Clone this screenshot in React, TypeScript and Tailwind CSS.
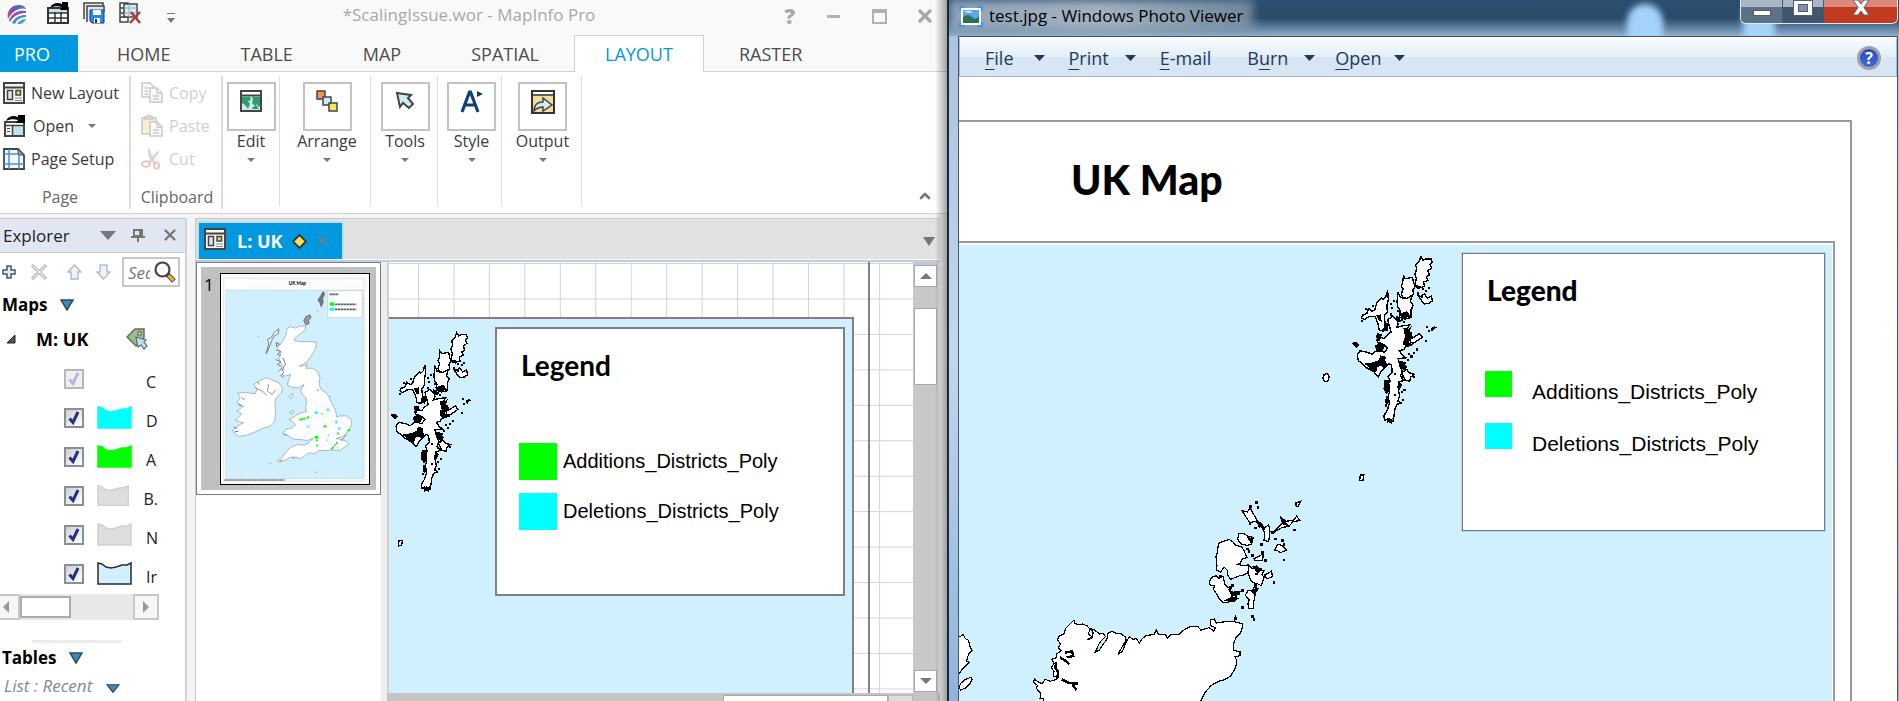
import React from 'react';
import { ChevronUp, X } from 'lucide-react';

type IconProps = { className?: string };

const RIBBON_TABS = ['HOME', 'TABLE', 'MAP', 'SPATIAL', 'LAYOUT', 'RASTER'];

const LAYERS = [
  { id: 'c', label: 'C', fill: '', stroke: '', dim: true },
  { id: 'd', label: 'D', fill: '#00ffff', stroke: '#00ffff' },
  { id: 'a', label: 'A', fill: '#00ff00', stroke: '#00ff00' },
  { id: 'b', label: 'B.', fill: '#dedede', stroke: '#cfcfcf' },
  { id: 'n', label: 'N', fill: '#dedede', stroke: '#cfcfcf' },
  { id: 'i', label: 'Ir', fill: '#d0efff', stroke: '#2b2b2b' },
];

const PHOTO_MENU = [
  { pre: '', key: 'F', post: 'ile', arrow: true, gap: 'gap-5 pr-6' },
  { pre: '', key: 'P', post: 'rint', arrow: true, gap: 'gap-4 pr-6' },
  { pre: '', key: 'E', post: '-mail', arrow: false, gap: 'pr-9' },
  { pre: 'B', key: 'u', post: 'rn', arrow: true, gap: 'gap-4 pr-5' },
  { pre: '', key: 'O', post: 'pen', arrow: true, gap: 'gap-3' },
];

/* ---------- icons ---------- */

const LogoIcon = () => (
  <svg width="20" height="20" viewBox="0 0 20 20">
    <defs>
      <linearGradient id="logo" x1="0" y1="1" x2="1" y2="0">
        <stop offset="0" stopColor="#e0408a" />
        <stop offset="0.5" stopColor="#7b4bb0" />
        <stop offset="1" stopColor="#2f8fd6" />
      </linearGradient>
    </defs>
    <path d="M1 15C-1 7 5 0 13 1c3 0 5 2 6 4C13 3 6 6 1 15z" fill="url(#logo)" />
    <path d="M2 16C6 8 12 6 19 7v2C13 9 7 11 3 18z" fill="#8a53b5" />
    <path d="M5 19c3-6 8-8 14-8v2c-5 0-9 2-11 7z" fill="#4b86d2" />
    <path d="M10 20c2-3 5-5 9-5-1 3-5 6-9 5z" fill="#3aa5dc" />
  </svg>
);

const OpenTableIcon = () => (
  <svg width="22" height="22" viewBox="0 0 22 22">
    <rect x="1" y="6" width="20" height="15" fill="#fff" stroke="#333" strokeWidth="2" />
    <path d="M2 7h18v3H2z" fill="#bfe0ea" />
    <path d="M1 11h20M1 16h20M8 10v11M14 10v11" stroke="#333" strokeWidth="1.5" />
    <path d="M3 6C5 1 10 0 15 2V0h6v8h-8l2-3C11 4 7 4 3 6z" fill="#000" />
  </svg>
);

const SaveIcon = () => (
  <svg width="22" height="22" viewBox="0 0 22 22">
    <path d="M1 17V1h19v4" fill="#eee" stroke="#444" strokeWidth="1.5" />
    <path d="M4 20V4h17v6" fill="#d5ebf5" stroke="#444" strokeWidth="1.5" />
    <path d="M7 8h14v13H9l-2-2z" fill="#2f86e0" stroke="#123c80" />
    <path d="M10 8h8v5h-8z" fill="#fff" />
    <path d="M11 16h6v5h-6z" fill="#fff" />
    <path d="M12 17h2v4h-2z" fill="#123c80" />
  </svg>
);

const CloseTableIcon = () => (
  <svg width="22" height="22" viewBox="0 0 22 22">
    <path d="M1 1h8v19H1zM1 6h8M1 11h8M1 15h8" fill="#fff" stroke="#444" strokeWidth="1.5" />
    <path d="M5 2h13v13H5z" fill="#d5ebf5" stroke="#444" strokeWidth="1.5" />
    <path d="M5 6h13M5 11h13M10 2v13" stroke="#8fb0bb" />
    <path d="M12 10l9 11M21 10l-10 11" stroke="#b03a3a" strokeWidth="2.5" />
  </svg>
);

const NewLayoutIcon = () => (
  <svg width="22" height="22" viewBox="0 0 22 22" className="shrink-0">
    <rect x="1" y="1" width="20" height="20" fill="#f6f6f6" stroke="#444" strokeWidth="2" />
    <path d="M1 5.5h20" stroke="#444" strokeWidth="2" />
    <rect x="4.5" y="8.5" width="5" height="9" fill="#cfeaf3" stroke="#444" strokeWidth="1.5" />
    <rect x="13" y="8.5" width="4.5" height="4.5" fill="#f5d94f" stroke="#444" strokeWidth="1.5" />
    <path d="M12 16h7M12 18.5h7" stroke="#888" />
  </svg>
);

const OpenIcon = () => (
  <svg width="22" height="22" viewBox="0 0 22 22">
    <rect x="2" y="7" width="19" height="14" fill="#fff" stroke="#444" strokeWidth="2" />
    <path d="M10 11h10v9H10z" fill="#bfe3ee" />
    <path d="M2 10.5h19M9.5 10v11" stroke="#444" strokeWidth="1.5" />
    <path d="M4 13.500h3M4 16.500h3" stroke="#444" />
    <path d="M3 6C5 1 10 0 15 2V0h7v8h-9l2-3C11 4 7 4 3 6z" fill="#000" />
  </svg>
);

const PageSetupIcon = () => (
  <svg width="22" height="22" viewBox="0 0 22 22">
    <path d="M1 1h14l6 6v14H1z" fill="#f4f8fc" stroke="#444" strokeWidth="1.8" />
    <path d="M15 1v6h6z" fill="#999" stroke="#444" />
    <path d="M6 1v20M16 8v13M1 6h13M1 16h20" stroke="#4a90d9" strokeWidth="1.5" />
  </svg>
);

const CopyIcon = () => (
  <svg width="22" height="22" viewBox="0 0 22 22" fill="#fafafa" stroke="#c9c9c9" strokeWidth="1.5">
    <path d="M1 1h8l4 4v10H1z" />
    <path d="M3.5 6h4M3.5 9h4M3.5 12h4" />
    <path d="M9 6h7l5 5v9H9z" />
    <path d="M16 6v5h5M12 14h6M12 17h6" />
  </svg>
);

const PasteIcon = () => (
  <svg width="22" height="22" viewBox="0 0 22 22" stroke="#c9c9c9" strokeWidth="1.5">
    <path d="M1 3h14v16H1z" fill="#fbeecb" />
    <path d="M4 4V2h2a2 2 0 0 1 4 0h2v2z" fill="#e4e4e4" />
    <path d="M9 7h7l5 5v9H9z" fill="#fafafa" />
    <path d="M16 7v5h5M12 15h6M12 18h6" fill="none" />
  </svg>
);

const CutIcon = () => (
  <svg width="22" height="22" viewBox="0 0 22 22" fill="none">
    <path d="M8 1l2 6 5 9-3-1-4-7zM18 3l-4 6-6 7-1-1 5-7z" fill="#e6e6e6" stroke="#cdcdcd" />
    <ellipse cx="5" cy="16" rx="4" ry="2.800" stroke="#ecc6c6" strokeWidth="2" />
    <ellipse cx="15.500" cy="17.500" rx="2.500" ry="3.300" stroke="#ecc6c6" strokeWidth="2" />
  </svg>
);

const EditIcon = () => (
  <svg width="22" height="22" viewBox="0 0 22 22">
    <rect x="1" y="1" width="20" height="20" fill="#cfeaf3" stroke="#444" strokeWidth="2" />
    <path d="M2 2h18v3H2z" fill="#fff" />
    <path d="M2 7h8l1 3-3 1 2 3-2 5-3-4-3-2zM12 7h8v9l-2 1-1-3-2 2-3-3 1-3zM12 18l4-3 3 4h-7z" fill="#2f9e68" />
    <path d="M1 5.5h20" stroke="#444" strokeWidth="2" />
  </svg>
);

const ArrangeIcon = () => (
  <svg width="22" height="22" viewBox="0 0 22 22" stroke="#444" strokeWidth="1.5">
    <rect x="1" y="1" width="8" height="8" fill="#f2935f" />
    <rect x="7" y="7" width="8" height="8" fill="#cfeaf3" />
    <rect x="13" y="13" width="8" height="8" fill="#f7e463" />
  </svg>
);

const PointerIcon = () => (
  <svg width="22" height="22" viewBox="0 0 22 22">
    <path d="M3 3l14 2-3 3 5 6-4 4-6-5-3 4z" fill="#cfeaf3" stroke="#444" strokeWidth="2" />
  </svg>
);

const StyleIcon = () => (
  <svg width="24" height="24" viewBox="0 0 24 24" fill="none" stroke="#103f74" strokeWidth="3.2">
    <path d="M2 22L9.500 2h1L18 22M5 15h10" />
    <path d="M17 1l6 3-6 3z" fill="#103f74" stroke="none" />
  </svg>
);

const OutputIcon = () => (
  <svg width="24" height="24" viewBox="0 0 24 24">
    <rect x="1" y="1" width="22" height="22" fill="#f0dea0" stroke="#333" strokeWidth="2" />
    <path d="M2 2h20v2H2z" fill="#fff" />
    <path d="M1 5h22" stroke="#333" strokeWidth="1.5" />
    <path d="M3 21c0-7 4-9 9-9V8l9 7-9 6v-4c-4 0-6 1-9 4z" fill="#cfeaf3" stroke="#444" strokeWidth="1.5" />
  </svg>
);

const Triangle = ({ className }: IconProps) => (
  <svg className={className} viewBox="0 0 12 7" preserveAspectRatio="none">
    <path d="M0 0h12L6 7z" fill="currentColor" />
  </svg>
);

const BlueTriangle = ({ className }: IconProps) => (
  <svg className={className} viewBox="0 0 14 12" preserveAspectRatio="none">
    <path d="M1 1h12L7 11z" fill="#3f86c0" stroke="#26505c" strokeWidth="1.5" />
  </svg>
);

const PinIcon = () => (
  <svg width="14" height="13" viewBox="0 0 14 13">
    <path d="M3 1h8v6H3z" fill="none" stroke="#777" strokeWidth="2" />
    <path d="M8 1h3v6H8zM0 7h14v2H0zM6 9h2v4H6z" fill="#777" />
  </svg>
);

const PlusIcon = () => (
  <svg width="14" height="14" viewBox="0 0 14 14">
    <path d="M5 1h4v4h4v4H9v4H5V9H1V5h4z" fill="#dff1f8" stroke="#4b5a62" strokeWidth="1.5" />
  </svg>
);

const DeleteIcon = () => (
  <svg width="16" height="16" viewBox="0 0 16 16">
    <path d="M1 1l14 14M15 1L1 15" stroke="#bcc4c8" strokeWidth="3.5" />
    <path d="M2 2l12 12M14 2L2 14" stroke="#eef5f8" strokeWidth="1" />
  </svg>
);

const ArrowIcon = ({ className }: IconProps) => (
  <svg className={className} width="15" height="16" viewBox="0 0 15 16">
    <path d="M7.500 1L14 8h-3v7H4V8H1z" fill="#e9f5fa" stroke="#b4bec2" strokeWidth="1.5" />
  </svg>
);

const MagnifierIcon = () => (
  <svg width="22" height="22" viewBox="0 0 22 22">
    <circle cx="8.5" cy="8.5" r="7" fill="#f8fcff" stroke="#444" strokeWidth="2.2" />
    <path d="M13 13l7 7" stroke="#444" strokeWidth="5" />
    <path d="M14.500 14.500l5 5" stroke="#f0b93a" strokeWidth="3" />
  </svg>
);

const TagIcon = () => (
  <svg width="22" height="22" viewBox="0 0 22 22">
    <path d="M1 9l8-8h9v9l-8 8z" fill="#9cbd8f" stroke="#66705f" strokeWidth="1.5" />
    <rect x="12" y="4" width="3" height="3" fill="#fff" stroke="#555" />
    <path d="M10 9l10 3-2 2 3 4-3 3-3-4-3 2z" fill="#bfe0f0" stroke="#5b6d75" strokeWidth="1.2" />
  </svg>
);

const PhotoIcon = () => (
  <svg width="24" height="21" viewBox="0 0 24 21">
    <path d="M1 5V1h5M18 1h5v4M1 16v4h5M18 20h5v-4" fill="none" stroke="#3b9be0" strokeWidth="2" />
    <rect x="3" y="3" width="18" height="15" fill="#5aa8e8" stroke="#fff" strokeWidth="2" />
    <path d="M4 11q5-4 9 0t7-1v7H4z" fill="#2e6f52" />
    <path d="M5 6q5-3 9 1z" fill="#e8f6ff" />
  </svg>
);

/* ---------- map drawings ---------- */

const SPECKS = [
  [712, 500], [714, 512], [720, 492], [732, 520], [712, 530], [742, 545], [748, 552], [660, 505], [640, 515], [628, 548],
  [815, 565], [820, 578], [812, 606], [785, 630], [778, 640], [770, 650], [760, 660], [764, 642], [752, 668], [700, 470],
  [640, 672], [655, 688], [690, 672], [676, 604], [800, 480], [788, 470], [820, 455], [812, 462], [802, 458], [722, 700],
  [745, 775], [742, 752], [750, 745], [700, 770], [697, 790], [722, 760], [778, 708], [742, 710], [690, 575], [758, 572],
];

const BLOBS =
  'M602 614l14 -3 8 8 -8 10 -6 -6zM828 572l10 -5 8 4 -8 3 -6 8 -4 -4zM702 828l8 7 9 -6 -1 18 -10 -6 -6 5zM695 720l15 2 1 30 -10 8 -8 -14zM750 572l16 2 8 -8 -6 16 -16 8zM752 582l22 2 4 18 -22 3zM668 622l18 -10 12 12 -8 14 -16 2zM640 672l24 -2 18 -8 8 16 -14 6 -4 16 -20 -14zM684 650l16 4 -2 12 8 12 -14 8 -14 -16zM696 556l12 4 -2 22 -14 -4zM750 600l20 -4 -6 16 16 8 -24 8zM740 664l10 4 12 16 -10 10 -14 -12zM674 586l14 4 -2 14 -14 -4zM736 722l10 12 -8 18 -6 -10zM672 536l14 -4 2 22 -8 -2zM782 448l18 4 -2 10 -12 -4zM736 532l24 -8 12 16 -24 4zM700 764l10 6 -4 20 -8 -4zM728 536l12 6 4 14 -14 -4z';

const Shetland = ({ transform }: { transform: string }) => (
  <g transform={transform} shapeRendering="crispEdges">
    <g fill="#fff" stroke="#000" strokeWidth="4">
      <path d="M800 368l6 10 9 -4 15 0 2 10 -6 6 5 10 -11 8 4 12 -8 6 4 10 -12 4 2 13 -13 4 -14 -8 4 -18 -4 -14 5 -13 -3 -12 10 -10z" />
      <path d="M750 423l6 8 20 -4 3 15 5 10 -7 12 2 11 -8 12 -20 0 -7 -12 5 -15 -5 -8 4 -10z" />
      <path d="M735 470l7 15 18 2 14 -8 -4 18 8 10 -6 13 0 22 -18 4 -15 -5 2 -19 -8 -12 -1 -15z" />
      <path d="M790 476l8 6 12 -8 8 12 12 -6 3 14 -10 7 -13 2 -10 -12z" />
      <path d="M705 465l2 26 -4 14 1 20 -9 12 3 22 -5 22 -12 -4 -3 -15 -5 -14 -5 -10 -18 2 -12 8 -8 -5 4 -8 12 -5 4 -14 10 8 8 -4 6 -20 14 -14 4 4 8 -8z" />
      <path d="M705 548l14 -10 12 10 4 12 -5 10 16 -4 22 -3 -12 16 6 10 10 6 3 10 -22 0 -2 12 8 4 -8 12 -12 4 8 12 10 8 -22 2 4 18 8 18 -6 14 11 12 -14 5 -3 20 4 20 -5 14 10 6 -13 4 -6 16 -2 18 -3 14 -10 -7 -14 4 -2 -12 10 -16 6 -20 -4 -20 5 -14 -7 -16 8 -14 -6 -14 12 -12 -2 -20 -8 -4 -12 14 -10 10 -8 14 -12 -14 -10 -6 -12 -6 -12 -12 -11 -8 -3 -16 8 -12 20 4 15 6 14 -12 20 6 10 -12 -10 -10 -16 -5 -6 -8 10 -8 12 4 10 -12 10 -6z" />
      <path d="M745 700l14 -10 8 10 14 4 -10 8 -3 12 -14 -4 -4 -12z" />
      <path d="M768 602l12 -4 16 -10 8 10 -14 10 -12 8 -8 -4z" />
      <path d="M627 992l10 0 -2 14 -10 2z" />
      <path d="M524 704l8 -2 6 8 -4 14 -10 0 -4 -8z" />
    </g>
    <path d={BLOBS} />
    {SPECKS.map(([x, y]) => (
      <rect key={`${x}-${y}`} x={x} y={y} width="6" height="6" />
    ))}
  </g>
);

const ORKNEY_SPECKS = [
  [905, 410], [936, 438], [940, 446], [1030, 268], [962, 222], [928, 160], [945, 172], [1062, 178], [1000, 335], [876, 345],
  [948, 95], [952, 110], [930, 108], [905, 360], [925, 242], [920, 235], [935, 255], [965, 245], [975, 270], [1005, 205],
  [1025, 210], [1030, 222], [945, 345], [960, 295], [948, 310], [884, 365], [895, 370], [840, 318], [870, 350], [995, 185],
];

const NorthCoast = () => (
  <g transform="translate(-19 225) scale(.3333)" shapeRendering="crispEdges" fill="#fff" stroke="#000" strokeWidth="3.600">
    <path d="M402 450l2 10 10 4 14 -2 14 6 8 10 -5 14 10 8 -13 10 13 -5 5 -17 -8 -12 12 4 14 12 12 -2 6 10 -12 12 -8 12 -10 22 12 -6 12 -18 10 -12 5 -22 12 -4 14 8 10 -2 14 10 4 10 -10 16 -15 27 14 -10 8 -22 12 -20 12 8 8 -4 10 14 8 -12 12 -10 25 -4 6 -14 6 14 22 2 5 10 8 -10 28 -2 15 -14 14 -8 26 -2 10 12 24 -8 14 10 6 -10 -14 -6 -2 -18 12 -2 6 12 28 -4 25 0 26 6 -2 16 -4 12 -14 14 -8 20 0 18 20 4 0 12 -15 4 6 12 -4 20 -15 25 -20 12 -16 4 -22 12 -18 20 -30 60 -448 0 -8 -40 -10 0 2 -16 -12 -14 2 -10 -12 -10 4 -8 8 6 14 8 10 -14 14 6 20 -6 5 -8 -15 -2 2 -14 -8 -10 8 -14 -6 -12 12 -4 2 -12 14 -10 -10 -8 8 -12 -10 -12 6 -12 14 -6 6 -18 10 -10z" />
    <path d="M365 628l20 10 28 2 -14 6 10 14M376 548l20 -4 4 14 -20 4M360 562l16 10 12 10M348 575l-2 20 8 10 -2 20" fill="none" strokeWidth="7" />
    <path d="M40 505l20 -5 10 -6 6 12 10 5 2 14 8 16 -10 10 -6 22 8 4 -18 18 -12 14 -18 4z" />
    <path d="M62 640l12 -10 18 -8 4 6 -6 12 -14 14 -14 6 -5 -8z" />
    <path d="M835 220l16 -6 16 -6 12 8 8 10 18 4 8 14 8 18 -16 6 -4 12 -8 3 16 4 16 -2 6 14 -4 8 -16 8 -14 3 -24 10 -10 -12 0 -14 -10 -10 -12 14 -12 -6 2 -12 -3 -28 5 -16z" />
    <path d="M926 285l10 12 14 -10 8 12 14 2 -6 12 6 10 -8 24 -12 -6 -10 -2 -10 -8 -8 -22z" />
    <path d="M975 314l10 -4 10 -8 2 18 -14 6 -8 -4z" />
    <path d="M815 322l14 -5 8 8 12 -5 6 24 14 12 8 16 12 8 -6 12 -16 4 -18 2 -10 -10 -8 -14 -10 -16 2 -10 -15 -4 2 -12z" />
    <path d="M916 376l8 -14 12 0 8 -12 10 6 -8 14 -4 22 -2 24 -14 0 -2 -14 4 -12z" />
    <path d="M893 208l4 -18 16 2 10 6 16 4 -4 20 -14 4 -18 -4z" />
    <path d="M906 122l16 4 8 -12 8 14 8 14 10 16 -12 -4 -14 4 -6 -8z" />
    <path d="M970 175l16 -10 4 20 -4 30 -14 -4 2 -20z" />
    <path d="M950 152l16 16 6 12" fill="none" strokeWidth="8" />
    <path d="M1000 186l14 -14 14 -14 -8 -18 18 14 24 -4 8 -12 10 14 -20 2 -14 16 -20 2 -22 14z" />
    <path d="M1068 98l14 -4 -8 16 -6 -2zM1004 240l10 -18 14 6 12 12 -18 8 -10 -6zM942 266l14 -6 14 -10 -2 22 -24 0z" />
    <path d="M886 438l4 8 -6 4zM950 150l16 14 -8 8zM856 392l20 -10 16 4 -10 8zM868 360l12 8 20 -4 -6 10 -18 4zM1022 142l10 20 12 4zM940 290l24 8 -10 10zM932 362l20 -6 -10 14zM925 204l14 2 -4 14z" fill="#000" strokeWidth="4" />
    {ORKNEY_SPECKS.map(([x, y]) => (
      <rect key={`${x}-${y}`} x={x} y={y} width="4" height="4" fill="#222" />
    ))}
  </g>
);

const GREEN_SPOTS = [
  [331, 622, 9, 6], [341, 620, 8, 6], [353, 616, 7, 6], [384, 535, 4, 5], [402, 643, 10, 6], [376, 674, 11, 8], [380, 684, 5, 6],
  [382, 700, 5, 6], [396, 607, 4, 4], [474, 655, 9, 5], [443, 664, 6, 6], [440, 692, 4, 6], [428, 706, 4, 8], [434, 698, 4, 4],
  [444, 708, 3, 4], [424, 712, 4, 3],
];
const CYAN_SPOTS = [
  [377, 601, 8, 8], [412, 592, 8, 7], [353, 643, 6, 6], [438, 628, 5, 9], [446, 649, 7, 6], [420, 555, 4, 5], [415, 671, 5, 4], [412, 685, 4, 4],
];

const PageThumbnail = () => (
  <svg className="block h-full w-full" viewBox="98 190 440 628" preserveAspectRatio="none">
    <defs>
      <pattern id="thumbGrid" width="12" height="12" patternUnits="userSpaceOnUse">
        <path d="M0 0H12M0 0V12" stroke="#e3e7ea" strokeWidth="1.5" />
      </pattern>
    </defs>
    <path d="M98 190h440v628H98z" fill="url(#thumbGrid)" />
    <path d="M106 203h418v606H106z" fill="#fff" stroke="#ccc" strokeWidth="1.5" />
    <path d="M170 203h354v34H170z" fill="url(#thumbGrid)" />
    <path d="M112 238h409v564H112z" fill="#d0efff" stroke="#c2ccd2" strokeWidth="1.5" />
    <text x="325" y="224" textAnchor="middle" className="font-['Lato'] text-[14px] font-bold">UK Map</text>
    <g fill="#fff" stroke="#8f999d" strokeWidth="2">
      <path d="M295 352l10 -5 15 5 10 -6 20 0 -2 12 -13 10 -13 10 -7 10 15 4 30 0 22 2 -2 16 -8 15 -10 15 -7 12 -15 10 -10 4 25 -4 -5 10 20 0 15 10 7 18 -2 20 5 15 15 10 10 15 8 18 7 12 5 15 2 13 8 -3 20 -1 15 11 2 15 -9 15 -8 13 -10 8 -20 6 15 3 15 5 8 10 -13 8 -15 10 -20 -2 -20 2 -20 0 -15 10 -15 -3 -15 10 -10 7 -15 -4 -15 0 -15 7 -15 7 -10 -4 15 -10 12 -16 13 -14 20 -8 20 2 15 -7 12 -15 -17 8 -20 -3 -20 -1 -15 -9 -18 -7 8 -13 20 -5 10 -10 -10 -10 -10 -5 18 -10 17 -10 17 -3 -2 -12 2 -15 -2 -15 -10 -10 -5 -10 10 -20 -15 10 -20 0 -15 -8 5 -17 5 -15 -15 5 -12 -5 7 -20 -10 -15 -5 -15 8 -15 -13 -15 15 -15 10 -20z" />
      <path d="M195 520l20 -12 20 -8 10 5 25 10 10 15 -2 18 -16 12 -4 15 2 25 -2 30 -13 15 -25 7 -20 10 -25 10 -25 3 -18 -15 13 -15 20 -10 -25 -7 20 -20 -15 -8 20 -15 -20 -10 10 -15 -7 -15 27 0 25 3 5 -13z" />
      <path d="M300 558l10 -12 2 6 -6 12zM302 602l12 -4 -2 8 -8 2z" />
    </g>
    <g fill="#fff" stroke="#5d6467" strokeWidth="2.5">
      <path d="M270 354l-2 14 -12 8 -6 10 -6 16 -8 20 -4 6 6 -20 2 -14 -4 -8 12 -6 8 -14zM262 395l10 4 -8 8zM262 418l14 4 -10 8 10 4M260 446l16 6 -10 8 12 8M270 482l8 -10 6 12 -8 10 8 6M282 440l8 20 -8 12" />
      <path d="M402 242l4 8 -6 14 2 10 -6 14 -4 -12 -6 -8 8 -12z" fill="#777" />
      <path d="M362 312l4 8 -8 8 2 10 -10 4 -6 -12 6 -12z" fill="#999" />
      <path d="M160 560l8 6M150 580l8 4M136 648l10 4M138 662l12 -2M205 512l8 8M243 757h3M378 783h3M384 302h2M209 377h2" />
      <path d="M272 750l8 -4M310 738l6 4M285 668l10 4M455 690l15 -20M425 715l20 -20M240 520l-4 20 14 10 10 -12M200 530l20 10 14 12" strokeWidth="2" fill="none" />
    </g>
    {GREEN_SPOTS.map(([x, y, w, h]) => (
      <rect key={`${x}-${y}`} x={x} y={y} width={w} height={h} fill="#00ff00" />
    ))}
    {CYAN_SPOTS.map(([x, y, w, h]) => (
      <rect key={`${x}-${y}`} x={x} y={y} width={w} height={h} fill="#00ffff" />
    ))}
    <path d="M415 240h103v80H415z" fill="#fff" stroke="#b5bcc0" strokeWidth="1.5" />
    <path d="M421 275h13v10h-13z" fill="#00ff00" />
    <path d="M421 291h13v9h-13z" fill="#00ffff" />
    <path d="M421 251h27M436 281h64M436 296h64" stroke="#333" strokeWidth="5" strokeDasharray="3 1.5" />
    <path d="M108 806h180" stroke="#333" strokeWidth="3" strokeDasharray="4 1" />
  </svg>
);

/* ---------- MapInfo window ---------- */

const RibbonDrop = ({ label, icon, pad }: { label: string; icon: React.ReactNode; pad: string }) => (
  <button className={`mt-1 flex h-[130px] flex-col items-center border-r border-[#dedede] pt-[6px] ${pad}`}>
    <span className="flex h-[49px] w-[49px] justify-center border-2 border-[#c2c2c2] pt-[6px]">{icon}</span>
    <span className="leading-5 text-[#3b3b3b]">{label}</span>
    <Triangle className="mt-[7px] h-1 w-2 text-[#777]" />
  </button>
);

const TitleBar = () => (
  <header className="flex h-[35px] shrink-0 items-start bg-[#f9f9f9] text-[#a8a8a8]">
    <div className="flex flex-1 items-start pl-[7px] pt-[2px]">
      <span className="mr-5 mt-[2px]"><LogoIcon /></span>
      <div className="flex items-start gap-[14px]">
        <button aria-label="Open table"><OpenTableIcon /></button>
        <button aria-label="Save"><SaveIcon /></button>
        <button aria-label="Close table"><CloseTableIcon /></button>
      </div>
      <button aria-label="Customize toolbar" className="ml-[26px] mt-[11px] flex flex-col items-center gap-1 text-[#777]">
        <span className="h-px w-2 bg-[#777]" />
        <Triangle className="h-[5px] w-2" />
      </button>
    </div>
    <h1 className="pt-[3px] text-[17px] leading-6">*ScalingIssue.wor - MapInfo Pro</h1>
    <div className="flex flex-1 items-center justify-end gap-8 pr-4 pt-1">
      <button aria-label="Help" className="text-[21px] font-extrabold leading-6">?</button>
      <button aria-label="Minimize" className="h-[3px] w-[13px] bg-[#b0b0b0]" />
      <button aria-label="Maximize" className="h-[15px] w-[15px] border-2 border-t-4 border-[#b0b0b0]" />
      <button aria-label="Close" className="-mx-1"><X className="h-5 w-5" strokeWidth={4} /></button>
    </div>
  </header>
);

const Ribbon = () => (
  <>
    <nav className="flex h-[37px] shrink-0 border-b border-[#d2d2d2] bg-[#f9f9f9] text-[18px] leading-[38px] text-[#4c4c4c]">
      <button className="mr-1 h-[37px] w-[78px] bg-[#0099e0] pr-[14px] text-white">PRO</button>
      {RIBBON_TABS.map(tab => (
        <button
          key={tab}
          className={tab === 'LAYOUT' ? 'h-[37px] border border-b-0 border-[#d2d2d2] bg-white px-[30px] leading-9 text-[#0099e0]' : 'px-[35px]'}
        >
          {tab}
        </button>
      ))}
    </nav>
    <div className="flex h-[142px] shrink-0 border-b border-[#d2d2d2] bg-white text-[16px] text-[#3b3b3b]">
      <section className="my-1 flex w-[131px] flex-col border-r-2 border-[#dcdcdc] pl-[3px] pt-px">
        <button className="flex h-[33px] items-center gap-[6px] whitespace-nowrap"><NewLayoutIcon />New Layout</button>
        <button className="flex h-[33px] items-center gap-2"><OpenIcon />Open<Triangle className="ml-[6px] h-1 w-2 text-[#777]" /></button>
        <button className="flex h-[33px] items-center gap-[6px] whitespace-nowrap"><PageSetupIcon />Page Setup</button>
        <span className="mt-[10px] pr-3 text-center leading-6 text-[#666]">Page</span>
      </section>
      <section className="my-1 flex w-[92px] flex-col border-r-2 border-[#dcdcdc] pl-[10px] pt-px text-[#cfcfcf]">
        <button className="flex h-[33px] items-center gap-[6px]"><CopyIcon />Copy</button>
        <button className="flex h-[33px] items-center gap-[6px]"><PasteIcon />Paste</button>
        <button className="flex h-[33px] items-center gap-[6px]"><CutIcon />Cut</button>
        <span className="-ml-2 mt-[10px] text-center leading-6 text-[#666]">Clipboard</span>
      </section>
      <RibbonDrop label="Edit" icon={<EditIcon />} pad="w-[57px]" />
      <RibbonDrop label="Arrange" icon={<ArrangeIcon />} pad="w-[91px] pl-1" />
      <RibbonDrop label="Tools" icon={<PointerIcon />} pad="w-[67px] pl-[2px]" />
      <RibbonDrop label="Style" icon={<StyleIcon />} pad="w-[64px] pl-1" />
      <RibbonDrop label="Output" icon={<OutputIcon />} pad="w-[80px] pl-[2px]" />
      <button aria-label="Collapse ribbon" className="ml-auto self-end pb-[9px] pr-[14px] text-[#777]">
        <ChevronUp className="h-4 w-4" strokeWidth={4} />
      </button>
    </div>
  </>
);

const Explorer = () => (
  <aside className="flex w-[187px] shrink-0 flex-col border-r-2 border-[#d4d4d4] bg-white">
    <div className="flex h-[35px] items-center border-b border-t border-[#c8c8c8] bg-[#e0e7f3] pl-[3px] text-[#777]">
      <h2 className="w-[97px] text-[17px] text-[#222]">Explorer</h2>
      <Triangle className="h-[9px] w-4" />
      <button aria-label="Pin" className="ml-[15px]"><PinIcon /></button>
      <button aria-label="Close explorer" className="ml-4"><X className="h-[18px] w-[18px]" strokeWidth={3} /></button>
    </div>
    <div className="flex h-[39px] items-center pl-[2px]">
      <button aria-label="Add"><PlusIcon /></button>
      <button aria-label="Remove" className="ml-[15px]"><DeleteIcon /></button>
      <button aria-label="Move up" className="ml-5"><ArrowIcon /></button>
      <button aria-label="Move down" className="ml-[14px]"><ArrowIcon className="rotate-180" /></button>
      <label className="ml-[11px] flex h-[30px] w-[58px] items-center border-2 border-[#c8c8c8] pl-1">
        <input aria-label="Search" defaultValue="Search" className="w-[22px] text-[17px] italic text-[#777] outline-none" />
        <span className="ml-1"><MagnifierIcon /></span>
      </label>
    </div>
    <h3 className="flex h-[26px] items-center gap-3 pl-[2px] text-[17px] font-bold">
      Maps <BlueTriangle className="h-3 w-[14px]" />
    </h3>
    <div className="flex h-[42px] items-center pl-[6px] pt-[2px]">
      <svg width="10" height="10" viewBox="0 0 10 10"><path d="M9 1v8H1z" fill="#555" stroke="#222" /></svg>
      <span className="ml-5 w-[90px] text-[18px] font-bold">M: UK</span>
      <TagIcon />
    </div>
    <ul className="w-[158px] overflow-hidden">
      {LAYERS.map(layer => (
        <li key={layer.id} className="h-[39px]">
          <label className="flex h-full items-center pl-16">
            <span className="relative h-5 w-5">
              <input
                type="checkbox"
                defaultChecked
                disabled={layer.dim}
                className="peer block h-5 w-5 appearance-none border-2 border-[#8a8f94] bg-linear-to-br from-[#cdd0d6] to-white disabled:border-[#b4b8bc] disabled:from-[#f0f0f2] disabled:to-[#f0f0f2]"
              />
              <svg className="pointer-events-none absolute inset-0 hidden text-[#262f80] peer-checked:block peer-disabled:text-[#b4b9dc]" viewBox="0 0 20 20">
                <path d="M5.500 10.500l3.500 4 5-10.500" fill="none" stroke="currentColor" strokeWidth="3" />
              </svg>
            </span>
            <svg className="ml-[13px]" width="35" height="23" viewBox="0 0 35 23">
              {layer.fill && (
                <path d="M1 1l4 1 4 3 5 1 5-1 6-2h5l4-2v21H1z" fill={layer.fill} stroke={layer.stroke} strokeWidth="1.5" />
              )}
            </svg>
            <span className="ml-[14px] pt-[6px] text-[16px] leading-6 text-[#222]">{layer.label}</span>
          </label>
        </li>
      ))}
    </ul>
    <div className="mt-[2px] flex h-[26px] w-[159px] items-center bg-[#e8e8e8] text-[#999]">
      <button aria-label="Scroll left" className="flex h-full w-5 items-center border-2 border-l-0 border-[#c8c8c8] bg-[#f7f7f7]">
        <Triangle className="h-[6px] w-3 rotate-90" />
      </button>
      <span className="h-[22px] w-[51px] border-2 border-[#ababab] bg-white" />
      <button aria-label="Scroll right" className="ml-auto flex h-full w-[26px] items-center justify-center border-2 border-[#c8c8c8] bg-[#f7f7f7]">
        <Triangle className="h-[6px] w-3 -rotate-90" />
      </button>
    </div>
    <div className="ml-8 mt-5 h-[3px] w-[90px] bg-[#ededed]" />
    <h3 className="mt-[2px] flex h-[26px] items-center gap-3 pl-[2px] text-[17px] font-bold">
      Tables <BlueTriangle className="h-3 w-[14px]" />
    </h3>
    <div className="flex h-[30px] items-center gap-[14px] pl-1 text-[17px] italic text-[#7c8b98]">
      List : Recent <BlueTriangle className="mt-1 h-[9px] w-[14px]" />
    </div>
  </aside>
);

const LegendRow = ({ color, label, swatch, text }: { color: string; label: string; swatch: string; text: string }) => (
  <li className="flex items-start">
    <span className={`${swatch} ${color}`} />
    <span className={`font-['Liberation_Sans',sans-serif] whitespace-nowrap text-black ${text}`}>{label}</span>
  </li>
);

const LayoutCanvas = () => (
  <div className="relative min-w-0 flex-1 overflow-hidden border-l-2 border-[#d0d0d0] bg-white pr-[59px]">
    <svg className="absolute inset-0 h-full w-full">
      <defs>
        <pattern id="grid" x="29" y="1" width="35.45" height="35.45" patternUnits="userSpaceOnUse">
          <path d="M0 .5H36M.5 0V36" stroke="#cfd5dc" strokeWidth="1.2" />
        </pattern>
      </defs>
      <rect width="100%" height="100%" fill="url(#grid)" />
    </svg>
    <div className="absolute inset-y-0 right-[43px] w-[2px] bg-[#858080]" />
    <div className="relative mt-[55px] h-full overflow-hidden border-r-2 border-t-2 border-[#808080] bg-[#d0efff]">
      <svg className="absolute inset-0 h-full w-full">
        <Shetland transform="translate(-199 -109) scale(.3333)" />
      </svg>
      <section className="relative ml-auto mr-[7px] mt-2 h-[269px] w-[350px] border-2 border-[#808080] bg-white pl-[22px] pt-4">
        <h2 className="ml-[2px] font-['Lato'] text-[28px] font-bold leading-10 text-black">Legend</h2>
        <ul className="mt-[58px] flex flex-col gap-[13px]">
          <LegendRow color="bg-[#00ff00]" label="Additions_Districts_Poly" swatch="h-[37px] w-[38px]" text="pl-[6px] text-[20px] leading-[37px]" />
          <LegendRow color="bg-[#00ffff]" label="Deletions_Districts_Poly" swatch="h-[37px] w-[38px]" text="pl-[6px] text-[20px] leading-[37px]" />
        </ul>
      </section>
    </div>
  </div>
);

const DocumentArea = () => (
  <main className="ml-2 mr-[7px] flex min-w-0 flex-1 flex-col border-l border-t border-[#c8c8c8] bg-[#e1e1e1]">
    <div className="flex h-[40px] shrink-0 items-end justify-between bg-[#e1e1e1] pl-px pr-[5px]">
      <div className="flex h-[38px] w-[147px] items-center border-2 border-b-0 border-[#bfe0f0] bg-[#0099e0] pb-1 pl-[5px] text-white">
        <NewLayoutIcon />
        <span className="ml-[11px] pt-1 text-[18px] font-bold">L: UK</span>
        <svg className="ml-[9px] mt-1" width="15" height="15" viewBox="0 0 15 15">
          <path d="M7.500 1L14 7.500 7.500 14 1 7.500z" fill="#f7e25c" stroke="#333" strokeWidth="1.8" />
        </svg>
        <button aria-label="Close tab" className="ml-2 pt-1 text-[#7d7d7d]"><X className="h-4 w-4" strokeWidth={2.5} /></button>
      </div>
      <button aria-label="Open documents" className="self-center pt-1 text-[#777]"><Triangle className="h-[9px] w-3" /></button>
    </div>
    <div className="h-[3px] shrink-0 border-b-2 border-[#b9cde6] bg-white" />
    <div className="flex min-h-0 flex-1 bg-[#eeeeee]">
      <div className="w-[185px] shrink-0 bg-white">
        <div className="flex h-[233px] border border-[#7c7c88] bg-white p-1">
          <div className="flex flex-1 bg-[#c0c0c0] pt-[6px]">
            <span className="w-[19px] pl-[3px] text-[17px] leading-6 text-black">1</span>
            <div className="h-[212px] w-[150px] border border-black bg-white">
              <PageThumbnail />
            </div>
          </div>
        </div>
      </div>
      <div className="w-[6px] shrink-0" />
      <div className="flex min-w-0 flex-1 flex-col">
        <div className="flex min-h-0 flex-1">
          <LayoutCanvas />
          <div className="flex w-[27px] shrink-0 flex-col border-r-2 border-[#e4e4e8] bg-[#c8c8c8] px-px pb-px pt-[3px] text-[#777]">
            <button aria-label="Scroll up" className="flex h-[22px] items-center justify-center border border-[#a8a8a8] bg-white">
              <Triangle className="h-[6px] w-3 rotate-180" />
            </button>
            <span className="mt-[21px] h-[77px] border border-[#a8a8a8] bg-white" />
            <button aria-label="Scroll down" className="mt-auto flex h-[22px] items-center justify-center border border-[#a8a8a8] bg-white">
              <Triangle className="h-[6px] w-3" />
            </button>
          </div>
        </div>
        <div className="flex h-2 shrink-0 justify-end bg-[#c4c4c4] pr-[27px] pt-[2px]">
          <span className="w-[165px] border border-b-0 border-[#a8a8a8] bg-white" />
          <span className="w-[25px] border border-b-0 border-[#b8b8b8] bg-[#ddd]" />
        </div>
      </div>
    </div>
  </main>
);

const MapInfoWindow = () => (
  <div className="relative flex min-h-0 min-w-0 flex-col overflow-hidden bg-[#f4f4f4]">
    <TitleBar />
    <Ribbon />
    <div className="mt-1 flex min-h-0 flex-1">
      <Explorer />
      <DocumentArea />
    </div>
    <div className="pointer-events-none absolute inset-y-0 right-0 w-3 bg-linear-to-r from-transparent to-black/35" />
  </div>
);

/* ---------- Photo Viewer window ---------- */

const PhotoViewer = () => (
  <div className="relative flex min-h-0 min-w-0 flex-col overflow-hidden border-l-2 border-[#18283c] bg-linear-to-b from-[#a9bfdc] via-[#c3d7ec] to-[#90b2db]">
    <div className="absolute inset-x-0 top-0 h-9 overflow-hidden bg-linear-to-b from-[#2b4f70] via-[#2a4b69] to-[#8fb0d0]">
      <div className="absolute left-0 top-0 h-8 w-[304px] bg-linear-to-r from-[#8ea3b8] via-[#a3b2c0] to-[#8396a9]/80 blur-[5px]" />
      <div className="absolute right-[236px] top-1 h-12 w-9 rounded-t-full bg-[#a4d2fa] blur-[3px]" />
      <div className="absolute right-[124px] top-2 h-12 w-8 bg-[#a4d2fa] blur-[3px]" />
    </div>
    <header className="relative flex h-9 shrink-0 items-start justify-between pl-[10px] pr-px">
      <div className="flex items-center gap-[6px] pt-1">
        <PhotoIcon />
        <h1 className="text-[17px] leading-6 text-black">test.jpg - Windows Photo Viewer</h1>
      </div>
      <div className="flex h-6 overflow-hidden rounded-b-md border border-t-0 border-[#e2ebf3] text-white">
        <button aria-label="Minimize" className="flex w-[42px] items-end justify-center border-r border-[#4a5a6c] bg-linear-to-b from-[#a9b6c4] from-30% to-[#5b7186] to-30% pb-[7px]">
          <span className="h-[6px] w-[18px] border border-[#555d70] bg-white" />
        </button>
        <button aria-label="Maximize" className="flex w-[41px] justify-center border-r border-[#4a5a6c] bg-linear-to-b from-[#a9b6c4] from-30% to-[#41566c] to-30%">
          <span className="flex h-4 w-5 items-center justify-center border border-[#555d70] bg-white">
            <span className="h-2 w-[10px] border border-[#555d70] bg-[#8090a5]" />
          </span>
        </button>
        <button aria-label="Close" className="flex w-[73px] justify-center bg-linear-to-b from-[#dc8a7c] from-30% to-[#c23a20] to-30%">
          <svg width="18" height="16" viewBox="0 0 18 16">
            <path d="M1 0h5l3 4 3-4h5l-5 7.500 5 7.500h-5l-3-4-3 4H1l5-7.500z" fill="#fff" stroke="#5a5f72" />
          </svg>
        </button>
      </div>
    </header>
    <div className="relative ml-[9px] mr-px flex min-h-0 flex-1 flex-col overflow-hidden border border-b-0 border-[#44556c] bg-white">
      <nav className="flex h-10 shrink-0 items-center border border-t-2 border-b-[#9fb4cd] border-l-[#a9b9cb] border-r-[#a9b9cb] border-t-white bg-linear-to-b from-[#f6fafe] via-[#e3eef8] via-50% to-[#d8e5f3] to-50% pl-[25px] text-[18px] leading-6 text-[#1e395b]">
        {PHOTO_MENU.map(item => (
          <button key={item.key} className={`flex items-center ${item.gap}`}>
            <span>
              {item.pre}
              <span className="underline underline-offset-4">{item.key}</span>
              {item.post}
            </span>
            {item.arrow && <Triangle className="h-[6px] w-[11px]" />}
          </button>
        ))}
        <button aria-label="Help" className="ml-auto mr-[15px] h-6 w-6 rounded-full border-[3px] border-[#9da1a8] bg-linear-to-b from-[#2a4bb8] to-[#3d6be0] text-[16px] font-bold leading-4 text-white">
          ?
        </button>
      </nav>
      <div className="mr-[45px] mt-[43px] flex min-h-0 flex-1 flex-col border-r-2 border-t-2 border-[#999] bg-white">
        <h2 className="h-[119px] pl-[112px] pt-[28px] font-['Lato'] text-[41px] font-black leading-[60px] text-black">UK Map</h2>
        <div className="mr-[15px] min-h-0 flex-1 border-r-2 border-t-2 border-[#999] pr-px pt-[2px]">
          <div className="relative h-full overflow-hidden bg-[#d0efff]">
            <svg className="absolute inset-0 h-full w-full">
              <Shetland transform="translate(181.900 -117.100) scale(.35)" />
              <NorthCoast />
            </svg>
            <section className="relative ml-auto mr-[7px] mt-2 h-[278px] w-[363px] border border-[#777] bg-white pl-[22px] pt-4 outline-1 outline-[#b9d6e4]">
              <h2 className="ml-[2px] font-['Lato'] text-[28px] font-black leading-10 text-black">Legend</h2>
              <ul className="mt-[61px] flex flex-col gap-[14px]">
                <LegendRow color="bg-[#00ff00]" label="Additions_Districts_Poly" swatch="h-[26px] w-[27px]" text="pl-5 pt-[3px] text-[21px] leading-[35px]" />
                <LegendRow color="bg-[#00ffff]" label="Deletions_Districts_Poly" swatch="h-[26px] w-[27px]" text="pl-5 pt-[3px] text-[21px] leading-[35px]" />
              </ul>
            </section>
          </div>
        </div>
      </div>
    </div>
  </div>
);

const App = () => (
  <div className="grid h-screen grid-cols-[947fr_952fr] grid-rows-1 overflow-hidden font-['Open_Sans','Noto_Sans',sans-serif]">
    <MapInfoWindow />
    <PhotoViewer />
  </div>
);

export default App;
